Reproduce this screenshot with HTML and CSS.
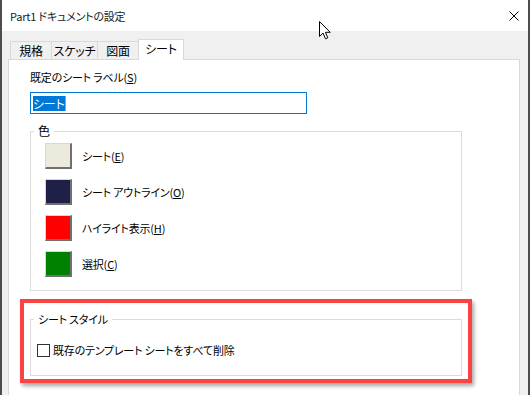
FILE: index.html
```html
<!DOCTYPE html>
<html lang="ja">
<head>
    <meta charset="UTF-8">
    <meta name="viewport" content="width=device-width, initial-scale=1.0">
    <title>Part1 ドキュメントの設定</title>
    <link rel="stylesheet" href="styles.css">
</head>
<body>
    <div class="window">
        <div class="titlebar">
            <span class="title">Part1 ドキュメントの設定</span>
            <svg class="close" width="10" height="10" viewBox="0 0 10 10">
                <path d="M0.5 0.5 L9.5 9.5 M9.5 0.5 L0.5 9.5" stroke="#000" stroke-width="1" fill="none"/>
            </svg>
        </div>

        <div class="body">
            <div class="tabs">
                <div class="tab tab-spec">規格</div>
                <div class="tab tab-sketch">スケッチ</div>
                <div class="tab tab-drawing">図面</div>
                <div class="tab tab-sheet active">シート</div>
            </div>

            <div class="panel">
                <label class="field-label" for="sheetLabel">既定のシート ラベル(<u>S</u>)</label>
                <div class="textbox" id="sheetLabel"><span class="selected">シート</span><span class="caret"></span></div>

                <fieldset class="group colors">
                    <legend>色</legend>
                    <div class="color-row">
                        <span class="swatch sheet"></span>
                        <span>シート(<u>E</u>)</span>
                    </div>
                    <div class="color-row">
                        <span class="swatch outline"></span>
                        <span>シート アウトライン(<u>O</u>)</span>
                    </div>
                    <div class="color-row">
                        <span class="swatch highlight-color"></span>
                        <span>ハイライト表示(<u>H</u>)</span>
                    </div>
                    <div class="color-row">
                        <span class="swatch select"></span>
                        <span>選択(<u>C</u>)</span>
                    </div>
                </fieldset>

                <div class="highlight">
                    <fieldset class="group style">
                        <legend>シート スタイル</legend>
                        <label class="check">
                            <input type="checkbox">
                            <span>既存のテンプレート シートをすべて削除</span>
                        </label>
                    </fieldset>
                </div>
            </div>
        </div>

        <svg class="cursor" width="13" height="19" viewBox="0 0 13 19">
            <path d="M0.5 0.5 L0.5 15.5 L4 12 L6.5 17.8 L8.8 16.8 L6.4 11.3 L11.2 11.3 Z" fill="#fff" stroke="#000" stroke-width="1" stroke-linejoin="round"/>
        </svg>
    </div>
</body>
</html>
```

FILE: styles.css
```css
body {
    margin: 0;
    font-family: "Noto Sans CJK JP", "Noto Sans", sans-serif;
    font-size: 11px;
    letter-spacing: -0.2px;
    font-feature-settings: "palt";
    color: #000;
    background-color: #4d4d4d;
}
.window {
    position: relative;
    width: 530px;
    height: 395px;
    box-sizing: border-box;
    border-left: 2px solid #4d4d4d;
    border-right: 2px solid #4d4d4d;
    display: flex;
    flex-direction: column;
    overflow: hidden;
}
.titlebar {
    height: 31px;
    flex: none;
    background-color: #fff;
    display: flex;
    align-items: center;
    justify-content: space-between;
    padding: 0 9px 0 8px;
}
.title {
    line-height: 16px;
    color: #1a1a1a;
}
.body {
    flex: 1;
    background-color: #f0f0f0;
    padding: 8px 8px 0 6px;
    display: flex;
    flex-direction: column;
}
.tabs {
    display: flex;
    align-items: flex-end;
    height: 20px;
    padding-left: 2px;
}
.tab {
    box-sizing: border-box;
    height: 18px;
    margin-right: -1px;
    border: 1px solid #d9d9d9;
    border-bottom: none;
    background-color: #f0f0f0;
    text-align: center;
    line-height: 17px;
    font-size: 12px;
}
.tab-spec { width: 42px; }
.tab-sketch { width: 47px; }
.tab-drawing { width: 42px; }
.tab-sheet { width: 46px; }
.tab.active {
    position: relative;
    height: 21px;
    margin-bottom: -1px;
    background-color: #fff;
}
.panel {
    flex: 1;
    background-color: #fff;
    border: 1px solid #d9d9d9;
    border-bottom: none;
    padding: 9px 0 0 21px;
}
.field-label {
    display: block;
    line-height: 16px;
}
.textbox {
    box-sizing: border-box;
    width: 277px;
    height: 22px;
    margin-top: 7px;
    border: 1px solid #0078d7;
    padding-left: 2px;
    display: flex;
    align-items: center;
}
.selected {
    background-color: #0078d7;
    color: #fff;
    line-height: 15px;
    font-size: 12px;
}
.caret {
    width: 1px;
    height: 15px;
    background-color: #ff8728;
}
.group {
    box-sizing: border-box;
    width: 432px;
    margin: 0;
    border: 1px solid #dcdcdc;
    padding: 0;
}
.group legend {
    margin-left: 3px;
    padding: 0 4px;
    line-height: 16px;
}
.colors {
    margin-top: 9px;
    padding-top: 4px;
    padding-bottom: 13px;
}
.colors legend {
    font-size: 12px;
}
.color-row {
    display: flex;
    align-items: center;
    gap: 10px;
    height: 26px;
    margin-left: 14px;
    line-height: 16px;
}
.color-row + .color-row {
    margin-top: 10px;
}
.swatch {
    box-sizing: border-box;
    width: 27px;
    height: 26px;
    border-style: solid;
    border-width: 1px 2px 2px 1px;
    border-color: #d8d8d8 #707070 #707070 #d8d8d8;
}
.swatch.sheet { background-color: #ece9dd; }
.swatch.outline { background-color: #1f1f47; }
.swatch.highlight-color { background-color: #ff0000; }
.swatch.select { background-color: #008000; }
.highlight {
    width: 452px;
    box-sizing: border-box;
    margin: 8px 0 0 -10px;
    border: 4px solid #fa4444;
    padding: 8px 6px 3px 6px;
    box-shadow: 2px 3px 4px rgba(0, 0, 0, 0.35);
}
.style {
    padding-bottom: 17px;
}
.check {
    display: flex;
    align-items: center;
    height: 16px;
    margin: 15px 0 0 6px;
    line-height: 16px;
}
.check input {
    appearance: none;
    width: 13px;
    height: 13px;
    margin: 0 3px 0 0;
    border: 1px solid #333;
    background-color: #fff;
}
.cursor {
    position: absolute;
    left: 317px;
    top: 21px;
}
```
